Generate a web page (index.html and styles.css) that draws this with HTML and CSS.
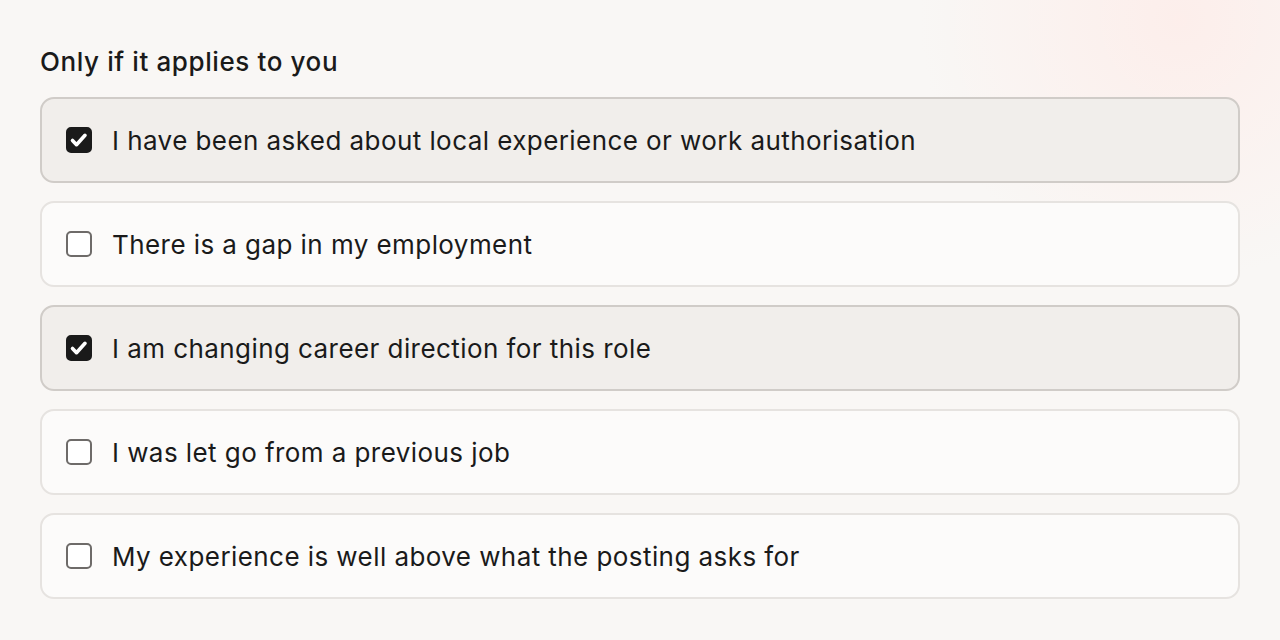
FILE: index.html
```html
<!DOCTYPE html>
<html lang="en">
<head>
  <meta charset="UTF-8">
  <title>Circumstances</title>
  <link rel="stylesheet" href="styles.css">
</head>
<body>
  <main class="panel">
    <h2 class="group-title">Only if it applies to you</h2>
    <div class="option-list">
      <label class="option checked">
        <input type="checkbox" checked>
        <span class="box"></span>
        <span class="option-text">I have been asked about local experience or work authorisation</span>
      </label>
      <label class="option">
        <input type="checkbox">
        <span class="box"></span>
        <span class="option-text">There is a gap in my employment</span>
      </label>
      <label class="option checked">
        <input type="checkbox" checked>
        <span class="box"></span>
        <span class="option-text">I am changing career direction for this role</span>
      </label>
      <label class="option">
        <input type="checkbox">
        <span class="box"></span>
        <span class="option-text">I was let go from a previous job</span>
      </label>
      <label class="option">
        <input type="checkbox">
        <span class="box"></span>
        <span class="option-text">My experience is well above what the posting asks for</span>
      </label>
    </div>
  </main>
</body>
</html>
```

FILE: styles.css
```css
* { box-sizing: border-box; margin: 0; padding: 0; }
html, body { height: 100%; }
body {
  background: #f9f7f5;
  background-image: radial-gradient(circle at 1180px 20px, rgba(255, 232, 228, 0.6), rgba(255, 240, 236, 0) 260px);
  color: #1a1a1a;
  font-family: Inter, 'Noto Sans', sans-serif;
}
.panel {
  padding: 44px 40px 0 40px;
}
.group-title {
  font-size: 26px;
  font-weight: 500;
  line-height: 36px;
  margin-bottom: 17px;
  letter-spacing: 0.6px;
}
.option-list {
  display: flex;
  flex-direction: column;
  gap: 18px;
}
.option {
  height: 86px;
  display: flex;
  align-items: center;
  gap: 20px;
  padding: 2px 24px 0;
  background: #fcfbfa;
  border: 2px solid #e6e3e0;
  border-radius: 14px;
  cursor: pointer;
  font-size: 26px;
  line-height: 32px;
}
.option.checked {
  background: #f1eeeb;
  border-color: #d0ccc8;
}
.option input { display: none; }
.box {
  width: 26px;
  height: 26px;
  flex: none;
  margin-top: -2px;
  border: 2px solid #6e6b69;
  border-radius: 5px;
  background: #fff;
}
.option.checked .box {
  border-color: #1a1a1a;
  background: #1a1a1a url("data:image/svg+xml,%3Csvg xmlns='http://www.w3.org/2000/svg' viewBox='0 0 22 22'%3E%3Cpath d='M4.5 11.5l4 4.2 8.5-9.4' fill='none' stroke='white' stroke-width='3.6' stroke-linecap='round' stroke-linejoin='round'/%3E%3C/svg%3E") center / 100% no-repeat;
}
.option-text {
  letter-spacing: 0.43px;
}
```
